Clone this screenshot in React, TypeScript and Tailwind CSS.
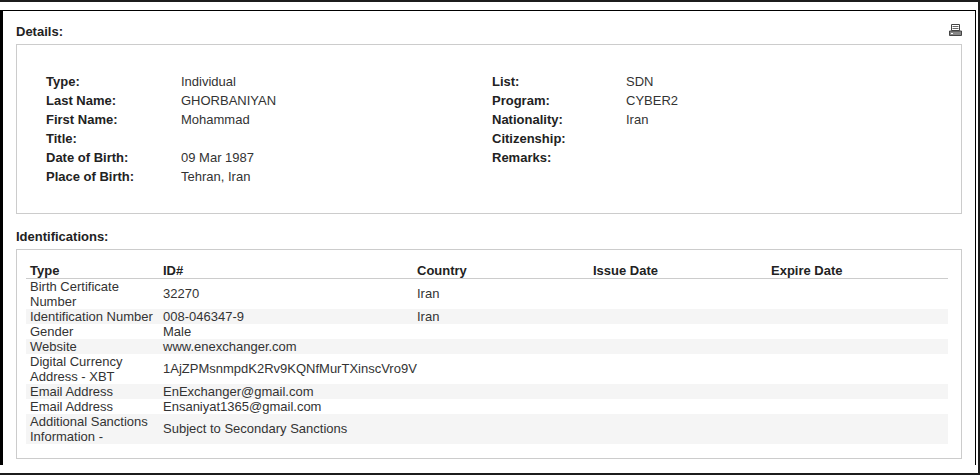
const details: [string, string, string, string][] = [
  ['Type:', 'Individual', 'List:', 'SDN'],
  ['Last Name:', 'GHORBANIYAN', 'Program:', 'CYBER2'],
  ['First Name:', 'Mohammad', 'Nationality:', 'Iran'],
  ['Title:', '', 'Citizenship:', ''],
  ['Date of Birth:', '09 Mar 1987', 'Remarks:', ''],
  ['Place of Birth:', 'Tehran, Iran', '', ''],
];

const identifications = [
  { type: 'Birth Certificate Number', id: '32270', country: 'Iran', tall: true },
  { type: 'Identification Number', id: '008-046347-9', country: 'Iran' },
  { type: 'Gender', id: 'Male', country: '' },
  { type: 'Website', id: 'www.enexchanger.com', country: '' },
  { type: 'Digital Currency Address - XBT', id: '1AjZPMsnmpdK2Rv9KQNfMurTXinscVro9V', country: '', tall: true },
  { type: 'Email Address', id: 'EnExchanger@gmail.com', country: '' },
  { type: 'Email Address', id: 'Ensaniyat1365@gmail.com', country: '' },
  { type: 'Additional Sanctions Information -', id: 'Subject to Secondary Sanctions', country: '', tall: true },
];

function PrintIcon() {
  return (
    <svg width="13" height="12" viewBox="0 0 13 12" className="block">
      <path d="M2.500.5h8v6h-8z" fill="#fff" stroke="#444" />
      <path d="M3.500 2.500h6M3.500 4.500h6" stroke="#666" />
      <path d="M.5 7h12v4.500H.5z" fill="#888" stroke="#444" />
      <path d="M2 9.500h2" stroke="#fff" />
    </svg>
  );
}

export default function App() {
  return (
    <div className="w-[980px] h-[475px] overflow-hidden bg-white border-t-2 border-r-2 border-b-2 border-[#1c1c1c] font-['Liberation_Sans',Arial,sans-serif] text-[13px] leading-[15px] text-[#333]">
      <div className="pt-2 h-full">
        <div className="h-[calc(100%-8px)] mr-[2px] border-t border-l-[3px] border-r border-black px-[13px]">
          {/* Details */}
          <div className="flex items-end justify-between h-[33px] pb-[5px]">
            <h2 className="font-bold text-[#222]">Details:</h2>
            <div className="pb-[3px]">
              <PrintIcon />
            </div>
          </div>
          <div className="h-[170px] border border-[#ccc] pt-[29px] pl-[29px] grid grid-cols-[135px_311px_134px_1fr] auto-rows-[19px] content-start">
            {details.map((row) => (
              <div key={row[0]} className="contents">
                <div className="font-bold text-[#222]">{row[0]}</div>
                <div>{row[1]}</div>
                <div className="font-bold text-[#222]">{row[2]}</div>
                <div>{row[3]}</div>
              </div>
            ))}
          </div>

          {/* Identifications */}
          <h2 className="font-bold text-[#222] mt-[15px] mb-[5px]">Identifications:</h2>
          <div className="h-[210px] border border-[#ccc] pt-[13px] px-[9px]">
            <table className="w-[922px] table-fixed border-collapse">
              <thead>
                <tr className="border-b border-[#ccc] text-left text-[#222]">
                  <th className="w-[133px] pl-1 font-bold">Type</th>
                  <th className="w-[254px] pl-1 font-bold">ID#</th>
                  <th className="w-[176px] pl-1 font-bold">Country</th>
                  <th className="w-[178px] pl-1 font-bold">Issue Date</th>
                  <th className="pl-1 font-bold">Expire Date</th>
                </tr>
              </thead>
              <tbody>
                {identifications.map((row, i) => (
                  <tr key={i} className={i % 2 === 1 ? 'bg-[#f5f5f5]' : ''}>
                    <td className="pl-1">{row.type}</td>
                    <td className={row.tall ? 'pl-1 pb-[2px] whitespace-nowrap' : 'pl-1 whitespace-nowrap'}>{row.id}</td>
                    <td className={row.tall ? 'pl-1 pb-[2px]' : 'pl-1'}>{row.country}</td>
                    <td />
                    <td />
                  </tr>
                ))}
              </tbody>
            </table>
          </div>
        </div>
      </div>
    </div>
  );
}
